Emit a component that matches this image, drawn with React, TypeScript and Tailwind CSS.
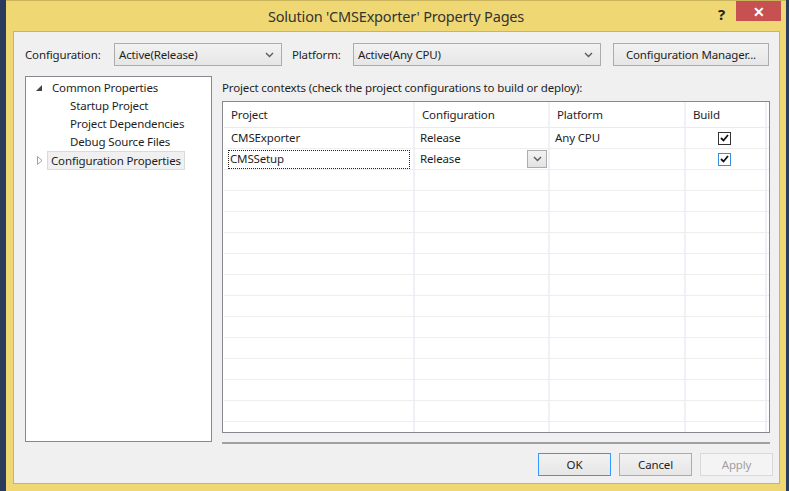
import React from 'react';

const font = { fontFamily: '"Noto Sans", "Open Sans", sans-serif' };

const Chevron = () => (
    <svg width="9" height="6" viewBox="0 0 9 6" className="text-[#5a5a5a]">
        <path d="M1 1 L4.5 4.5 L8 1" fill="none" stroke="currentColor" strokeWidth="1.4" />
    </svg>
);

const Check = ({ focused }: { focused?: boolean }) => (
    <div className={`w-[13px] h-[13px] bg-white border flex items-center justify-center ${focused ? 'border-[#3c8fe0]' : 'border-[#333]'}`}>
        <svg width="9" height="8" viewBox="0 0 9 8">
            <path d="M1 4 L3.5 6.5 L8 1" fill="none" stroke="#111" strokeWidth="1.8" />
        </svg>
    </div>
);

const Select = ({ value, width }: { value: string; width: string }) => (
    <div className={`${width} h-[23px] border border-[#acacac] bg-gradient-to-b from-[#f2f2f2] to-[#e6e6e6] flex items-center justify-between pl-[4px] pr-[7px]`}>
        <span>{value}</span>
        <Chevron />
    </div>
);

const columns = [
    { title: 'Project', w: 'w-[191px]' },
    { title: 'Configuration', w: 'w-[135px]' },
    { title: 'Platform', w: 'w-[136px]' },
    { title: 'Build', w: 'w-[81px]' },
];

const App: React.FC = () => {
    const emptyRows = Array.from({ length: 13 });

    return (
        <div style={font} className="w-[789px] h-[491px] flex bg-[#2b3b5b] text-[11.5px] tracking-[-0.15px] text-[#1e1e1e] overflow-hidden">
            {/* Window frame */}
            <div className="ml-[6px] w-[780px] h-full bg-[#efd873] border-t border-[#c9b45c] flex flex-col">
                {/* Title bar */}
                <div className="h-[30px] flex items-start relative">
                    <div className="flex-1 text-center text-[14.5px] tracking-[-0.2px] text-[#333] pt-[5px]">Solution 'CMSExporter' Property Pages</div>
                    <div className="absolute right-[5px] top-0 flex items-start">
                        <span className="text-[15px] font-bold text-[#222] mr-[11px] mt-[2px]">?</span>
                        <div className="w-[45px] h-[20px] bg-[#c75050] flex items-center justify-center text-white text-[14px] font-bold">✕</div>
                    </div>
                </div>

                {/* Client area */}
                <div className="ml-[7px] mr-[6px] h-[453px] bg-[#f0f0f0] border border-[#c7b560] flex flex-col pl-[11px] pt-[11px]">
                    {/* Top row */}
                    <div className="flex items-center h-[23px]">
                        <span className="w-[89px]">Configuration:</span>
                        <Select value="Active(Release)" width="w-[168px]" />
                        <span className="ml-[10px] w-[61px]">Platform:</span>
                        <Select value="Active(Any CPU)" width="w-[248px]" />
                        <div className="ml-[12px] w-[156px] h-[23px] border border-[#acacac] bg-gradient-to-b from-[#f2f2f2] to-[#e6e6e6] flex items-center justify-center">
                            Configuration Manager...
                        </div>
                    </div>

                    {/* Body */}
                    <div className="flex mt-[10px]">
                        {/* Tree */}
                        <div className="w-[187px] h-[366px] bg-white border border-[#868a8e] pt-[2px]">
                            <div className="h-[18px] flex items-center">
                                <svg width="6" height="6" viewBox="0 0 6 6" className="ml-[10px] mr-[9px]">
                                    <path d="M6 0 L6 6 L0 6 Z" fill="#444" />
                                </svg>
                                <span className="px-[1px]">Common Properties</span>
                            </div>
                            <div className="h-[18px] flex items-center pl-[44px]">Startup Project</div>
                            <div className="h-[18px] flex items-center pl-[44px]">Project Dependencies</div>
                            <div className="h-[18px] flex items-center pl-[44px]">Debug Source Files</div>
                            <div className="h-[19px] flex items-center">
                                <svg width="6" height="9" viewBox="0 0 6 9" className="ml-[11px] mr-[4px]">
                                    <path d="M0.5 0.5 L5 4.5 L0.5 8.5 Z" fill="none" stroke="#a0a0a0" />
                                </svg>
                                <span className="h-[19px] flex items-center px-[3px] bg-[#f0f0f0] border border-[#dadada]">Configuration Properties</span>
                            </div>
                        </div>

                        {/* Right side */}
                        <div className="ml-[10px] w-[548px] flex flex-col">
                            <div className="h-[25px] pt-[3px]">Project contexts (check the project configurations to build or deploy):</div>
                            <div className="h-[332px] bg-white border border-[#868a8e] pl-[1px] overflow-hidden">
                                {/* Header */}
                                <div className="flex h-[26px] border-b border-[#e6ecf3]">
                                    {columns.map((c) => (
                                        <div key={c.title} className={`${c.w} border-r-2 border-[#eef2f7] flex items-center pl-[7px]`}>
                                            {c.title}
                                        </div>
                                    ))}
                                </div>
                                {/* Row 1 */}
                                <div className="flex h-[21px] border-b border-[#eeeeee]">
                                    <div className="w-[191px] border-r-2 border-[#eef2f7] flex items-center pl-[7px]">CMSExporter</div>
                                    <div className="w-[135px] border-r-2 border-[#eef2f7] flex items-center pl-[5px]">Release</div>
                                    <div className="w-[136px] border-r-2 border-[#eef2f7] flex items-center pl-[5px]">Any CPU</div>
                                    <div className="w-[81px] border-r-2 border-[#eef2f7] flex items-center pl-[32px]"><Check /></div>
                                </div>
                                {/* Row 2 */}
                                <div className="flex h-[21px] border-b border-[#eeeeee]">
                                    <div className="w-[191px] border-r-2 border-[#eef2f7] flex items-center pl-[4px]">
                                        <div className="w-[182px] h-[19px] border border-dotted border-[#222] flex items-center pl-[1px]">CMSSetup</div>
                                    </div>
                                    <div className="w-[135px] border-r-2 border-[#eef2f7] flex items-center pl-[5px] pr-[1px] justify-between">
                                        <span>Release</span>
                                        <div className="w-[20px] h-[18px] border border-[#acacac] bg-gradient-to-b from-[#f2f2f2] to-[#e3e3e3] flex items-center justify-center">
                                            <Chevron />
                                        </div>
                                    </div>
                                    <div className="w-[136px] border-r-2 border-[#eef2f7]" />
                                    <div className="w-[81px] border-r-2 border-[#eef2f7] flex items-center pl-[32px]"><Check focused /></div>
                                </div>
                                {emptyRows.map((_, i) => (
                                    <div key={i} className="flex h-[21px] border-b border-[#eeeeee]">
                                        {columns.map((c) => (
                                            <div key={c.title} className={`${c.w} border-r-2 border-[#eef2f7]`} />
                                        ))}
                                    </div>
                                ))}
                            </div>
                            <div className="mt-[9px] h-[2px] w-[548px] border-t-2 border-[#a0a0a0]" />
                        </div>
                    </div>

                    {/* Buttons */}
                    <div className="flex mt-[9px] ml-[513px] gap-[8px]">
                        <div className="w-[73px] h-[23px] border border-[#3399ff] bg-gradient-to-b from-[#f2f2f2] to-[#e6e6e6] flex items-center justify-center">OK</div>
                        <div className="w-[73px] h-[23px] border border-[#acacac] bg-gradient-to-b from-[#f2f2f2] to-[#e6e6e6] flex items-center justify-center">Cancel</div>
                        <div className="w-[73px] h-[23px] border border-[#d9d9d9] bg-[#f4f4f4] text-[#a0a0a0] flex items-center justify-center">Apply</div>
                    </div>
                </div>
            </div>
        </div>
    );
};

export default App;
